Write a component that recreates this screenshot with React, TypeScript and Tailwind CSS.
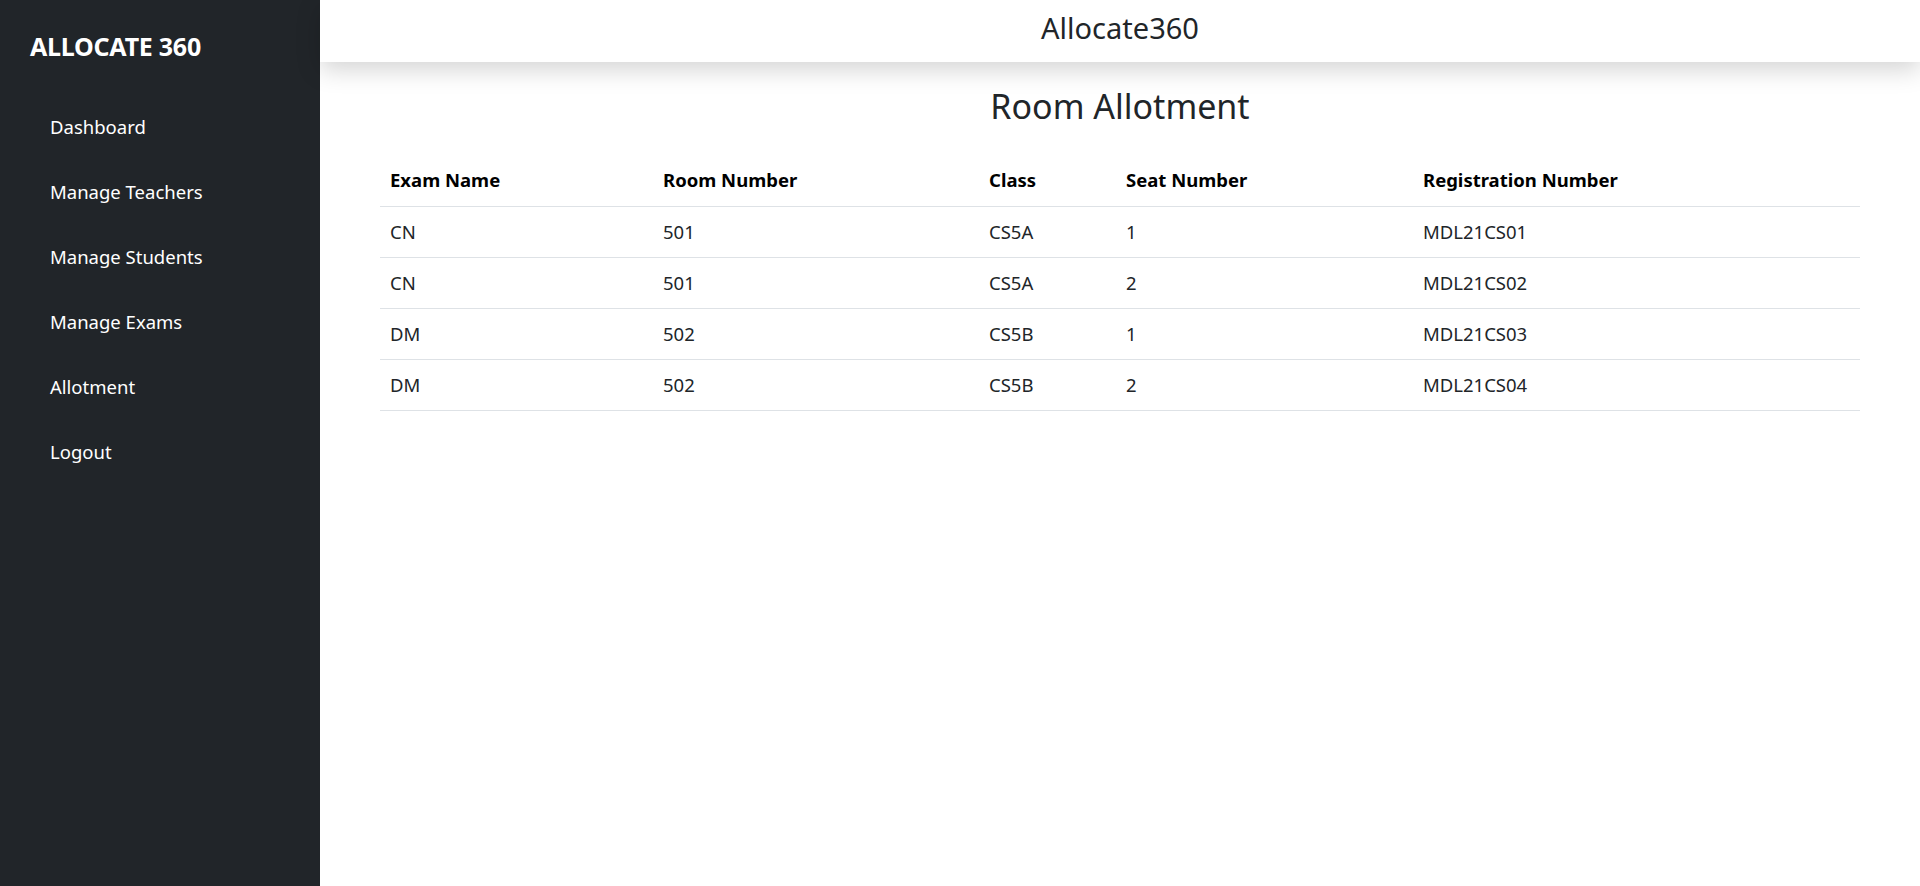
const NAV_ITEMS = [
  "Dashboard",
  "Manage Teachers",
  "Manage Students",
  "Manage Exams",
  "Allotment",
  "Logout",
];

const COLUMNS = [
  { label: "Exam Name", width: "w-[273px]" },
  { label: "Room Number", width: "w-[326px]" },
  { label: "Class", width: "w-[137px]" },
  { label: "Seat Number", width: "w-[297px]" },
  { label: "Registration Number", width: "w-[447px]" },
];

const ALLOTMENTS = [
  ["CN", "501", "CS5A", "1", "MDL21CS01"],
  ["CN", "501", "CS5A", "2", "MDL21CS02"],
  ["DM", "502", "CS5B", "1", "MDL21CS03"],
  ["DM", "502", "CS5B", "2", "MDL21CS04"],
];

function Sidebar() {
  return (
    <aside className="flex min-h-screen w-[320px] shrink-0 flex-col bg-[#212529] text-white">
      <div className="flex h-[94px] items-center px-[30px]">
        <span className="text-[25px] font-bold tracking-[-0.01em]">
          ALLOCATE 360
        </span>
      </div>
      <nav className="flex flex-col">
        {NAV_ITEMS.map((item) => (
          <a
            className="flex h-[65px] items-center pl-[50px] text-[18.5px] text-white"
            href="#"
            key={item}
          >
            {item}
          </a>
        ))}
      </nav>
    </aside>
  );
}

export default function App() {
  return (
    <div className="flex min-h-screen bg-white font-['Noto_Sans','Open_Sans',sans-serif] text-[#212529] antialiased">
      <Sidebar />

      <div className="flex min-w-0 flex-1 flex-col">
        <header className="relative z-10 flex h-[62px] items-center justify-center bg-white pb-[8px] shadow-[0_8px_24px_rgba(0,0,0,0.17)]">
          <h3 className="text-[29px] font-normal leading-none">Allocate360</h3>
        </header>

        <main className="px-[60px]">
          <h2 className="mt-[20px] flex h-[48px] items-center justify-center text-[34px] font-normal leading-none">
            Room Allotment
          </h2>

          <table className="mt-[25px] w-full table-fixed border-collapse text-[18.5px]">
            <thead>
              <tr className="h-[51px] border-b border-[#dee2e6]">
                {COLUMNS.map((col) => (
                  <th
                    className={`${col.width} px-[10px] text-left font-bold text-black`}
                    key={col.label}
                  >
                    {col.label}
                  </th>
                ))}
              </tr>
            </thead>
            <tbody>
              {ALLOTMENTS.map((row, i) => (
                <tr className="h-[51px] border-b border-[#dee2e6]" key={i}>
                  {row.map((cell, j) => (
                    <td className="px-[10px] text-[#212529]" key={j}>
                      {cell}
                    </td>
                  ))}
                </tr>
              ))}
            </tbody>
          </table>
        </main>
      </div>
    </div>
  );
}
